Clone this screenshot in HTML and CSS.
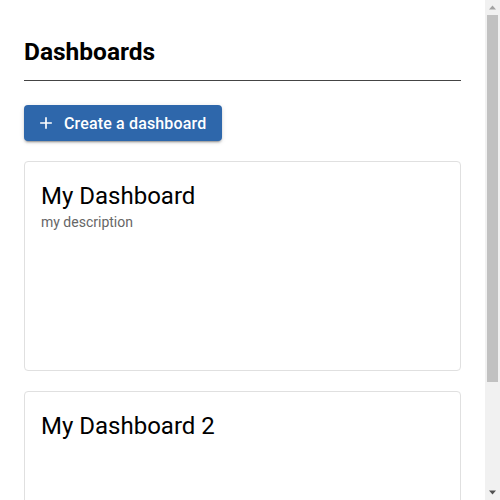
FILE: index.html
```html
<!DOCTYPE html>
<html>
<head>
<meta charset="utf-8">
<link rel="stylesheet" href="styles.css">
</head>
<body>
<div class="page">
  <header class="header">
    <h1 class="title">Dashboards</h1>
  </header>
  <div class="actions">
    <button class="btn">
      <svg class="btn-icon" viewBox="0 0 24 24" width="20" height="20"><path d="M19 13h-6v6h-2v-6H5v-2h6V5h2v6h6v2z" fill="currentColor"/></svg>
      <span>Create a dashboard</span>
    </button>
  </div>
  <div class="list">
    <div class="card">
      <div class="card-title">My Dashboard</div>
      <div class="card-desc">my description</div>
    </div>
    <div class="card">
      <div class="card-title">My Dashboard 2</div>
    </div>
  </div>
</div>
<div class="scrollbar">
  <svg class="sb-arrow" viewBox="0 0 15 15" width="15" height="15"><path d="M4 9.5h7L7.5 5.5z" fill="#a3a3a3"/></svg>
  <div class="sb-track"><div class="sb-thumb"></div></div>
  <svg class="sb-arrow" viewBox="0 0 15 15" width="15" height="15"><path d="M4 5.5h7L7.5 9.5z" fill="#505050"/></svg>
</div>
</body>
</html>
```
FILE: styles.css
```css
html, body {
  margin: 0;
  padding: 0;
  background: #fff;
}
body {
  font-family: Roboto, "Liberation Sans", sans-serif;
  color: #000;
}
.page {
  padding: 24px 39px 40px 24px;
}
.header {
  padding: 12px 0 12px;
  border-bottom: 1px solid #444;
}
.title {
  margin: 0;
  font-size: 24.5px;
  line-height: 32px;
  font-weight: 700;
}
.actions {
  margin-top: 24px;
  display: flex;
}
.btn {
  display: inline-flex;
  align-items: center;
  height: 36px;
  padding: 0 16px;
  border: none;
  border-radius: 4px;
  background: #2e67ab;
  color: #fff;
  font-family: Roboto, "Liberation Sans", sans-serif;
  font-size: 16px;
  font-weight: 500;
  letter-spacing: 0.15px;
  box-shadow: 0 3px 1px -2px rgba(0,0,0,0.2), 0 2px 2px 0 rgba(0,0,0,0.14), 0 1px 5px 0 rgba(0,0,0,0.12);
}
.btn-icon {
  margin-left: -4px;
  margin-right: 8px;
}
.list {
  margin-top: 20px;
  display: flex;
  flex-direction: column;
  gap: 20px;
}
.card {
  border: 1px solid #e0e0e0;
  border-radius: 4px;
  padding: 18px 16px 16px;
  box-sizing: border-box;
  height: 210px;
}
.card-title {
  font-size: 24px;
  line-height: 32px;
  font-weight: 400;
}
.card-desc {
  font-size: 14px;
  line-height: 20px;
  color: #666;
}
.scrollbar {
  position: fixed;
  top: 0;
  right: 0;
  width: 15px;
  height: 100vh;
  background: #f1f1f1;
  display: flex;
  flex-direction: column;
}
.sb-arrow {
  display: block;
  flex: none;
}
.sb-track {
  flex: 1;
  padding: 0 2px;
}
.sb-thumb {
  height: 367px;
  background: #c1c1c1;
}
```
